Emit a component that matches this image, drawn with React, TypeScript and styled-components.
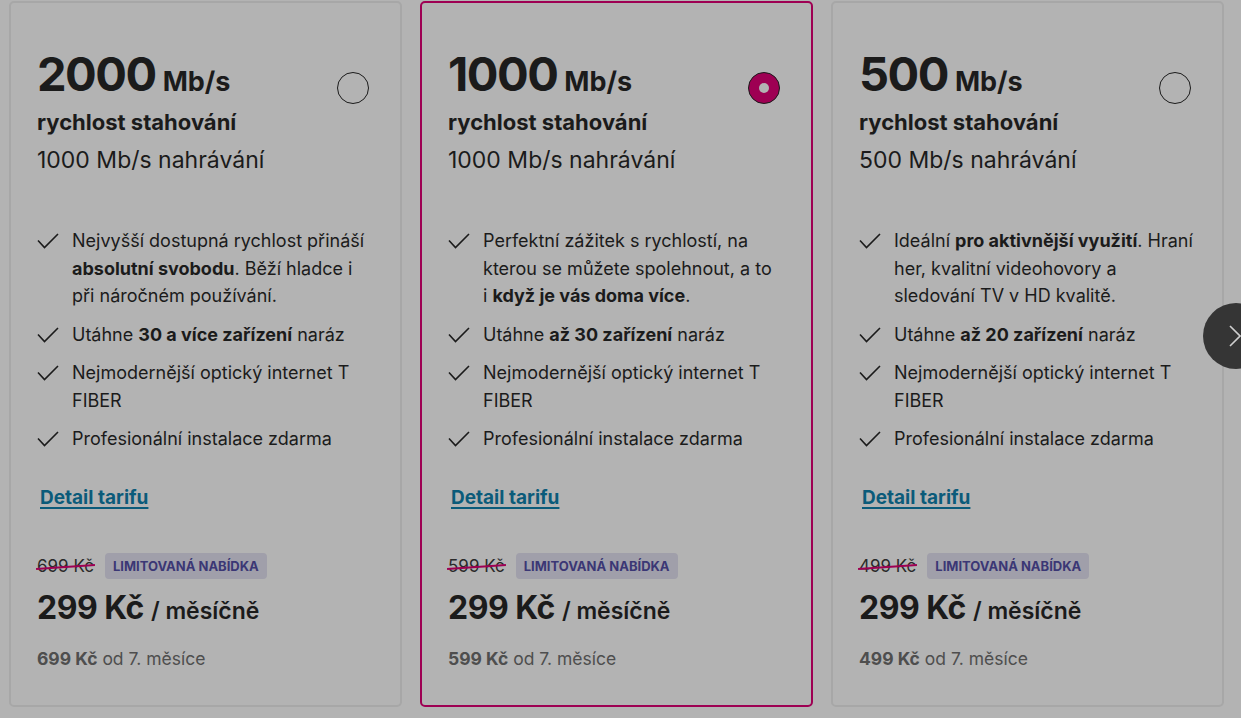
import React from "react";
import styled, { createGlobalStyle } from "styled-components";

const GlobalStyle = createGlobalStyle`
  html, body {
    margin: 0;
    padding: 0;
    background: #b3b3b3;
    overflow: hidden;
  }
  body {
    font-family: "Inter", "Noto Sans", Arial, sans-serif;
    color: #1b1b1b;
  }
`;

const Page = styled.div`
  position: relative;
  width: 1241px;
  height: 718px;
  overflow: hidden;
  background: #b3b3b3;
`;

const CardRow = styled.div`
  display: flex;
  gap: 18px;
  padding: 1px 0 0 9px;
`;

const Card = styled.div<{ $selected?: boolean }>`
  flex: 0 0 393px;
  box-sizing: border-box;
  height: 706px;
  border: 2px solid ${({ $selected }) => ($selected ? "#9e0053" : "#a7a7a7")};
  border-radius: 5px;
  padding: 47px 26px 0 26px;
  display: flex;
  flex-direction: column;
`;

const Head = styled.div`
  display: flex;
  justify-content: space-between;
  align-items: flex-start;
`;

const Speed = styled.div`
  display: flex;
  align-items: baseline;
  gap: 7px;
  line-height: 1;
`;

const SpeedNum = styled.span`
  font-size: 47px;
  font-weight: 700;
  letter-spacing: -1.5px;
`;

const SpeedUnit = styled.span`
  font-size: 27px;
  font-weight: 700;
`;

const Radio = styled.span<{ $on?: boolean }>`
  width: 32px;
  height: 32px;
  box-sizing: border-box;
  border-radius: 50%;
  border: 1.5px solid #1b1b1b;
  margin: 22px 5px 0 0;
  display: flex;
  align-items: center;
  justify-content: center;
  background: ${({ $on }) => ($on ? "#9e0053" : "transparent")};
  &::after {
    content: "";
    display: ${({ $on }) => ($on ? "block" : "none")};
    width: 10px;
    height: 10px;
    border-radius: 50%;
    background: #b3b3b3;
  }
`;

const SubBold = styled.div`
  font-size: 22px;
  font-weight: 700;
  margin-top: 10px;
  line-height: 30px;
`;

const SubLight = styled.div`
  font-size: 23px;
  font-weight: 400;
  margin-top: 8px;
  line-height: 30px;
`;

const Features = styled.ul`
  list-style: none;
  margin: 52px 0 0 0;
  padding: 0;
  display: flex;
  flex-direction: column;
  gap: 11px;
`;

const Feature = styled.li`
  display: flex;
  gap: 13px;
  font-size: 18px;
  line-height: 27.5px;
  svg {
    flex: 0 0 22px;
    margin-top: 6px;
  }
  b {
    font-weight: 700;
  }
`;

const DetailLink = styled.a`
  margin-top: 33px;
  margin-left: 3px;
  font-size: 19px;
  font-weight: 700;
  color: #0b5b7a;
  text-decoration: underline;
  text-underline-offset: 3px;
  text-decoration-thickness: 2px;
  align-self: flex-start;
`;

const PriceBlock = styled.div`
  margin-top: auto;
  padding-bottom: 36px;
`;

const PromoRow = styled.div`
  display: flex;
  align-items: center;
  gap: 11px;
`;

const OldPrice = styled.span`
  position: relative;
  font-size: 17px;
  color: #2a2a2a;
  &::after {
    content: "";
    position: absolute;
    left: -1px;
    right: -1px;
    top: 52%;
    height: 2px;
    background: #9e0053;
    transform: rotate(-4deg);
  }
`;

const Badge = styled.span`
  background: #a09faa;
  color: #3b3775;
  font-size: 13px;
  font-weight: 700;
  padding: 5px 8px;
  border-radius: 4px;
  line-height: 16px;
`;

const Price = styled.div`
  margin-top: 9px;
  display: flex;
  align-items: baseline;
  gap: 7px;
`;

const PriceMain = styled.span`
  font-size: 32px;
  font-weight: 700;
  letter-spacing: -0.5px;
`;

const PricePer = styled.span`
  font-size: 23px;
  font-weight: 600;
`;

const Later = styled.div`
  margin-top: 21px;
  font-size: 17.5px;
  color: #4e4e4e;
  b {
    font-weight: 700;
  }
`;

const NextButton = styled.button`
  position: absolute;
  left: 1203px;
  top: 303px;
  width: 66px;
  height: 66px;
  border-radius: 50%;
  border: none;
  background: #353535;
  padding: 0 0 0 26px;
  display: flex;
  align-items: center;
`;

const Check = () => (
  <svg width="22" height="16" viewBox="0 0 22 16" fill="none">
    <path d="M1 7.5 L7.5 14.5 L21 1" stroke="#1b1b1b" strokeWidth="1.6" />
  </svg>
);

type Plan = {
  speed: string;
  upload: string;
  features: React.ReactNode[];
  old: string;
  selected?: boolean;
};

const plans: Plan[] = [
  {
    speed: "2000",
    upload: "1000 Mb/s nahrávání",
    old: "699",
    features: [
      <>
        Nejvyšší dostupná rychlost přináší <b>absolutní svobodu</b>. Běží hladce i při náročném používání.
      </>,
      <>
        Utáhne <b>30 a více zařízení</b> naráz
      </>,
      <>Nejmodernější optický internet T FIBER</>,
      <>Profesionální instalace zdarma</>,
    ],
  },
  {
    speed: "1000",
    upload: "1000 Mb/s nahrávání",
    old: "599",
    selected: true,
    features: [
      <>
        Perfektní zážitek s rychlostí, na kterou se můžete spolehnout, a to i{"\u00a0"}
        <b>když je vás doma více</b>.
      </>,
      <>
        Utáhne <b>až 30 zařízení</b> naráz
      </>,
      <>Nejmodernější optický internet T FIBER</>,
      <>Profesionální instalace zdarma</>,
    ],
  },
  {
    speed: "500",
    upload: "500 Mb/s nahrávání",
    old: "499",
    features: [
      <>
        Ideální <b>pro aktivnější využití</b>. Hraní her, kvalitní videohovory a sledování TV v HD kvalitě.
      </>,
      <>
        Utáhne <b>až 20 zařízení</b> naráz
      </>,
      <>Nejmodernější optický internet T FIBER</>,
      <>Profesionální instalace zdarma</>,
    ],
  },
];

export default function App() {
  return (
    <Page>
      <GlobalStyle />
      <CardRow>
        {plans.map((p) => (
          <Card key={p.speed} $selected={p.selected}>
            <Head>
              <div>
                <Speed>
                  <SpeedNum>{p.speed}</SpeedNum>
                  <SpeedUnit>Mb/s</SpeedUnit>
                </Speed>
                <SubBold>rychlost stahování</SubBold>
                <SubLight>{p.upload}</SubLight>
              </div>
              <Radio $on={p.selected} />
            </Head>
            <Features>
              {p.features.map((f, i) => (
                <Feature key={i}>
                  <Check />
                  <span>{f}</span>
                </Feature>
              ))}
            </Features>
            <DetailLink href="#">Detail tarifu</DetailLink>
            <PriceBlock>
              <PromoRow>
                <OldPrice>{p.old} Kč</OldPrice>
                <Badge>LIMITOVANÁ NABÍDKA</Badge>
              </PromoRow>
              <Price>
                <PriceMain>299 Kč</PriceMain>
                <PricePer>/ měsíčně</PricePer>
              </Price>
              <Later>
                <b>{p.old} Kč</b> od 7. měsíce
              </Later>
            </PriceBlock>
          </Card>
        ))}
      </CardRow>
      <NextButton aria-label="Další">
        <svg width="12" height="22" viewBox="0 0 12 22" fill="none">
          <path d="M1 1 L11 11 L1 21" stroke="#cfcfcf" strokeWidth="1.6" />
        </svg>
      </NextButton>
    </Page>
  );
}
